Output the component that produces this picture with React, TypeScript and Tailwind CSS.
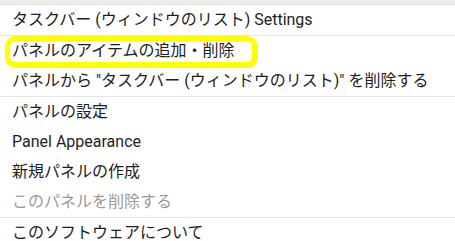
const items: { label: string; sepAfter?: boolean; disabled?: boolean; highlight?: boolean }[] = [
  { label: "タスクバー (ウィンドウのリスト) Settings", sepAfter: true },
  { label: "パネルのアイテムの追加・削除", highlight: true },
  { label: 'パネルから "タスクバー (ウィンドウのリスト)" を削除する', sepAfter: true },
  { label: "パネルの設定" },
  { label: "Panel Appearance" },
  { label: "新規パネルの作成" },
  { label: "このパネルを削除する", disabled: true, sepAfter: true },
  { label: "このソフトウェアについて" },
];

export default function App() {
  return (
    <div
      className="w-[455px] h-[241px] overflow-hidden bg-white text-[16px] text-[#1e1e1e]"
      style={{ fontFamily: 'Roboto, "Noto Sans CJK JP", sans-serif' }}
    >
      {/* top strip of the parent window */}
      <div className="h-[5px] bg-[#efebe9] border-b border-[#e4e0de]" />

      <div className="flex flex-col">
        {items.map((it) => (
          <div key={it.label}>
            <div className={`relative h-[30px] flex items-center pl-3 whitespace-nowrap ${it.disabled ? "text-[#9a9a9a]" : ""}`}>
              {it.label}
              {it.highlight && (
                <div className="absolute left-[5px] top-0 w-[253px] h-[32px] border-[5px] border-b-[6px] border-r-[6px] border-[#ffff00] rounded-[11px] pointer-events-none" />
              )}
            </div>
            {it.sepAfter && <div className="h-px bg-[#e6e6e6]" />}
          </div>
        ))}
      </div>
    </div>
  );
}
